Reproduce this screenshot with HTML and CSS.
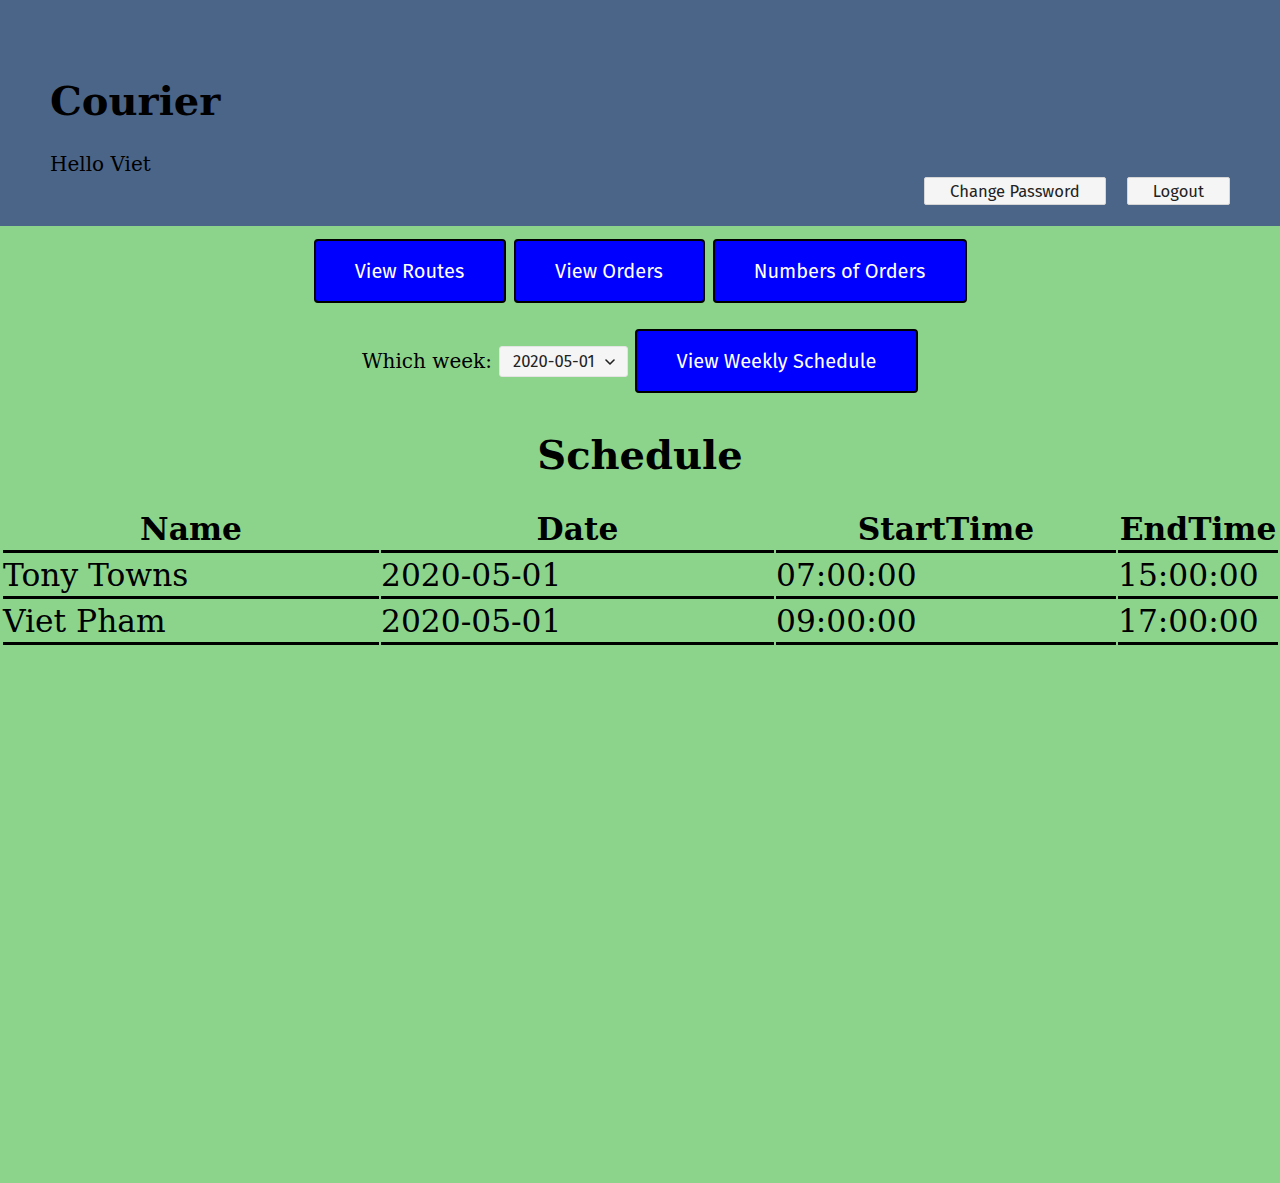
FILE: index.html
```html
<!DOCTYPE html>
<html lang="en">
<head>
<meta charset="utf-8">
<title>Courier</title>
<link rel="stylesheet" href="styles.css">
</head>
<body>
<header class="top">
  <div class="greeting">
    <h1 class="title">Courier</h1>
    <p class="hello">Hello Viet</p>
  </div>
  <div class="account">
    <button class="light-btn" type="button">Change Password</button>
    <button class="light-btn" type="button">Logout</button>
  </div>
</header>
<main>
  <nav class="nav-row">
    <button class="blue-btn btn-routes" type="button">View Routes</button>
    <button class="blue-btn btn-orders" type="button">View Orders</button>
    <button class="blue-btn btn-numbers" type="button">Numbers of Orders</button>
  </nav>
  <form class="week-row">
    <label class="week-label" for="week">Which week:</label>
    <span class="select-wrap">
      <select id="week" class="week-select">
        <option>2020-05-01</option>
      </select>
      <svg class="chevron" width="10" height="6" viewBox="0 0 10 6" aria-hidden="true">
        <path d="M1 1 L5 5 L9 1" fill="none" stroke="#222" stroke-width="1.6" stroke-linecap="round" stroke-linejoin="round"/>
      </svg>
    </span>
    <button class="blue-btn btn-weekly" type="button">View Weekly Schedule</button>
  </form>
  <h2 class="section-title">Schedule</h2>
  <table class="schedule">
    <thead>
      <tr>
        <th class="col-name">Name</th>
        <th class="col-date">Date</th>
        <th class="col-start">StartTime</th>
        <th class="col-end">EndTime</th>
      </tr>
    </thead>
    <tbody>
      <tr>
        <td>Tony Towns</td>
        <td>2020-05-01</td>
        <td>07:00:00</td>
        <td>15:00:00</td>
      </tr>
      <tr>
        <td>Viet Pham</td>
        <td>2020-05-01</td>
        <td>09:00:00</td>
        <td>17:00:00</td>
      </tr>
    </tbody>
  </table>
</main>
</body>
</html>
```

FILE: styles.css
```css
html, body {
  margin: 0;
  padding: 0;
}
body {
  background: #8cd48c;
  font-family: "DejaVu Serif", serif;
  color: #000;
  min-height: 1183px;
}
.top {
  background: #4b6589;
  display: flex;
  justify-content: space-between;
  align-items: flex-end;
  padding: 0 50px 21px 50px;
}
.greeting {
  padding-top: 50px;
}
.title {
  font-size: 40px;
  font-weight: bold;
  margin: 27px 0 28px 0;
}
.hello {
  font-size: 20px;
  margin: 0 0 29px 0;
}
.account {
  display: flex;
  gap: 21px;
}
.light-btn {
  font-family: "Fira Sans", "Open Sans", sans-serif;
  font-size: 16.6px;
  height: 28px;
  padding: 0 25px;
  background: #f5f5f5;
  color: #222;
  border: 1px solid #d6d6d6;
  border-radius: 2px;
}
.nav-row {
  display: flex;
  justify-content: center;
  gap: 8px;
  padding-top: 13px;
}
.blue-btn {
  font-family: "Fira Sans", "Open Sans", sans-serif;
  font-size: 20px;
  height: 64px;
  background: #0000ff;
  color: #fff;
  border: 2px solid #000;
  border-radius: 4px;
  padding: 0;
}
.btn-routes { width: 192px; }
.btn-orders { width: 191px; }
.btn-numbers { width: 254px; }
.btn-weekly { width: 283px; }
.week-row {
  display: flex;
  justify-content: center;
  align-items: center;
  gap: 7px;
  margin: 26px 0 0 0;
}
.week-label {
  font-size: 20px;
}
.select-wrap {
  position: relative;
  display: inline-flex;
}
.week-select {
  appearance: none;
  -webkit-appearance: none;
  font-family: "Fira Sans", "Open Sans", sans-serif;
  font-size: 16.6px;
  width: 129px;
  height: 31px;
  background: #f5f5f5;
  color: #222;
  border: 1px solid #e4e4e4;
  border-radius: 3px;
  padding: 0 24px 0 13px;
}
.chevron {
  position: absolute;
  right: 13px;
  top: 13px;
  pointer-events: none;
}
.section-title {
  text-align: center;
  font-size: 40px;
  font-weight: bold;
  margin: 38px 0 29px 0;
}
.schedule {
  margin-left: 1px;
  width: calc(100% - 1px);
  border-spacing: 2px;
  font-size: 31.3px;
}
.schedule th,
.schedule td {
  padding: 1px 0;
  line-height: 39px;
  border-bottom: 3px solid #000;
}
.schedule th {
  text-align: center;
  font-weight: bold;
}
.schedule td {
  text-align: left;
}
.col-name { width: 376px; }
.col-date { width: 393px; }
.col-start { width: 340px; }
```
